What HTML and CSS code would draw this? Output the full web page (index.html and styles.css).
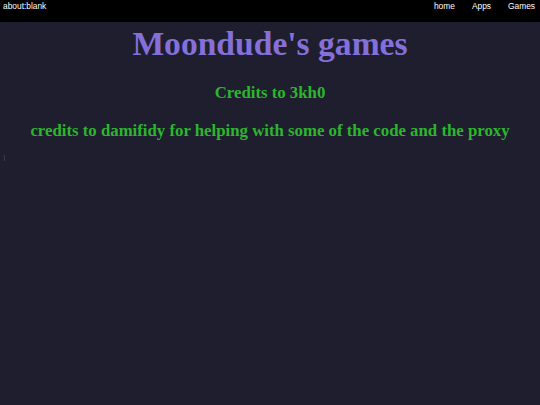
FILE: index.html
```html
<!DOCTYPE html>
<html>
<head>
<meta charset="utf-8">
<link rel="stylesheet" href="styles.css">
</head>
<body>
<nav class="topbar">
  <span class="brand">about:blank</span>
  <div class="links">
    <a href="#">home</a>
    <a href="#">Apps</a>
    <a href="#">Games</a>
  </div>
</nav>
<main class="content">
  <h1 class="title">Moondude's games</h1>
  <h3 class="credit">Credits to 3kh0</h3>
  <h3 class="credit">credits to damifidy for helping with some of the code and the proxy</h3>
  <div class="tick"></div>
</main>
</body>
</html>
```
FILE: styles.css
```css
html, body {
  margin: 0;
  padding: 0;
  background: #1e1e2f;
  height: 100%;
}
body {
  font-family: "Liberation Serif", serif;
}
.topbar {
  background: #000;
  height: 22px;
  box-sizing: border-box;
  display: flex;
  align-items: flex-start;
  justify-content: space-between;
  padding: 1px 5px 0 3px;
  font-family: "Liberation Sans", Arial, sans-serif;
  font-size: 8.4px;
  line-height: 10px;
  color: #fff;
}
.links {
  display: flex;
}
.links a {
  color: #fff;
  text-decoration: none;
  margin-left: 17px;
}
.content {
  text-align: center;
}
.title {
  color: #8470d8;
  font-size: 33.6px;
  margin: 3px 0 0 0;
}
.credit {
  color: #2db52d;
  font-size: 16.8px;
  margin: 20px 0 0 0;
}
.credit + .credit {
  margin-top: 18px;
}
.tick {
  width: 1px;
  height: 6px;
  background: #3a3a4a;
  margin: 14px 0 0 4px;
}
```
